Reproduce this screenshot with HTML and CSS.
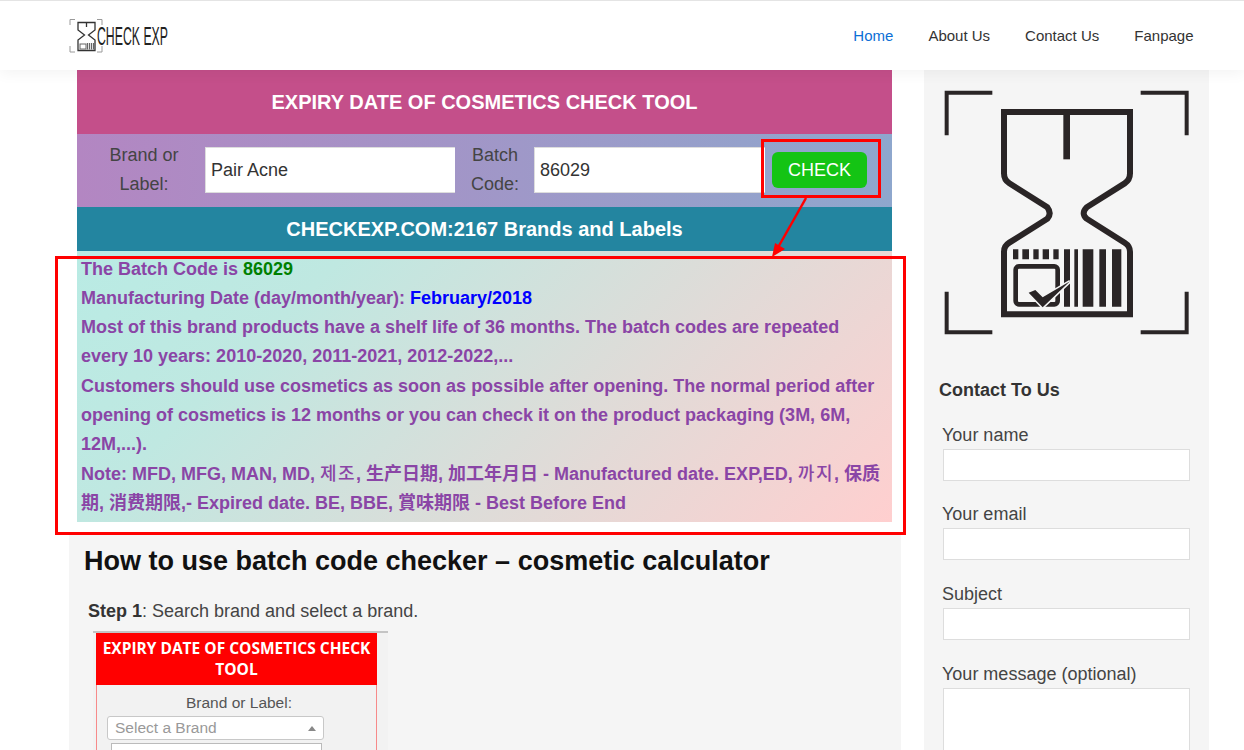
FILE: index.html
```html
<!DOCTYPE html>
<html lang="en">
<head>
<meta charset="utf-8">
<title>Check Exp</title>
<link rel="stylesheet" href="styles.css">
</head>
<body>
<header class="site-header">
  <a class="logo" href="#">
    <svg class="logo-svg" width="104" height="36" viewBox="0 0 104 36">
      <path class="logo-corners" d="M6 1.500H1V7M28 1.500H33V7M1 28V34H6M33 28V34H28"/>
      <path class="logo-glass" d="M9 4.500H26V12L19.500 17L26 22V32.500H9V22L15.500 17L9 12Z"/>
      <path class="logo-glass" d="M17.500 4.500V9"/>
      <rect class="logo-box" x="11" y="26" width="6" height="5"/>
      <path class="logo-bars" d="M18.500 25V31.500M20.500 25V31.500M22.500 25V31.500M24.500 25V31.500"/>
      <text class="logo-text" x="28" y="27" textLength="71" lengthAdjust="spacingAndGlyphs">CHECK EXP</text>
    </svg>
  </a>
  <nav class="nav">
    <a class="nav-link is-active" href="#">Home</a>
    <a class="nav-link" href="#">About Us</a>
    <a class="nav-link" href="#">Contact Us</a>
    <a class="nav-link" href="#">Fanpage</a>
  </nav>
</header>

<div class="page">
  <main class="main">
    <section class="tool">
      <h1 class="tool-title">EXPIRY DATE OF COSMETICS CHECK TOOL</h1>
      <form class="tool-form">
        <label class="field-label field-label-brand">Brand or Label:</label>
        <input class="field field-brand" type="text" value="Pair Acne">
        <label class="field-label field-label-code">Batch Code:</label>
        <input class="field field-code" type="text" value="86029">
        <button class="check-btn" type="button">CHECK</button>
      </form>
      <div class="tool-count">CHECKEXP.COM:2167 Brands and Labels</div>
      <div class="tool-result">
        <div>The Batch Code is <span class="ok">86029</span></div>
        <div>Manufacturing Date (day/month/year): <span class="date">February/2018</span></div>
        <div>Most of this brand products have a shelf life of 36 months. The batch codes are repeated every 10 years: 2010-2020, 2011-2021, 2012-2022,...</div>
        <div>Customers should use cosmetics as soon as possible after opening. The normal period after opening of cosmetics is 12 months or you can check it on the product packaging (3M, 6M, 12M,...).</div>
        <div>Note: MFD, MFG, MAN, MD, <span class="ko">제조</span>, 生产日期, 加工年月日 - Manufactured date. EXP,ED, <span class="ko">까지</span>, 保质期, 消费期限,- Expired date. BE, BBE, 賞味期限 - Best Before End</div>
      </div>
    </section>

    <article class="article">
      <h2 class="article-title">How to use batch code checker – cosmetic calculator</h2>
      <p class="step"><strong>Step 1</strong>: Search brand and select a brand.</p>
      <div class="shot">
        <div class="shot-card">
          <div class="shot-title">EXPIRY DATE OF COSMETICS CHECK TOOL</div>
          <div class="shot-body">
            <div class="shot-label">Brand or Label:</div>
            <div class="shot-select"><span>Select a Brand</span><i class="shot-caret"></i></div>
            <div class="shot-search"></div>
          </div>
        </div>
      </div>
    </article>
  </main>

  <aside class="side">
    <svg class="side-logo" width="245" height="245" viewBox="72 60 735 735">
      <path class="sl-corner" d="M217 68H80V196M662 68H800V196M80 665V787H217M800 665V787H662"/>
      <path class="sl-glass" d="M252 126H630V310Q630 330 614 340L500 412Q482 430 500 446L614 518Q630 528 630 545V733H252V545Q252 528 268 518L382 446Q396 430 382 412L268 340Q252 330 252 310Z"/>
      <path class="sl-stem" d="M440 135V268"/>
      <path class="sl-bars" d="M279 538h16v30h-16zM307 538h20v30h-20zM340 538h16v30h-16zM368 538h19v30h-19zM400 538h16v30h-16zM432 538h18v172h-18zM463 538h11v172h-11zM488 538h32v172h-32zM538 538h20v172h-20zM576 538h28v172h-28z"/>
      <rect class="sl-box" x="287" y="589" width="126" height="114" rx="10"/>
      <path class="sl-check" d="M326 668L346 660L368 682L450 634L368 712Z"/>
    </svg>
    <h3 class="side-title">Contact To Us</h3>
    <form class="contact">
      <label class="contact-field">Your name<input class="contact-input" type="text"></label>
      <label class="contact-field">Your email<input class="contact-input" type="text"></label>
      <label class="contact-field">Subject<input class="contact-input" type="text"></label>
      <label class="contact-field">Your message (optional)<textarea class="contact-area"></textarea></label>
    </form>
  </aside>

  <div class="mark mark-btn"></div>
  <div class="mark mark-result"></div>
  <svg class="mark-arrow" width="50" height="70" viewBox="0 0 50 70">
    <path class="arrow-line" d="M44 1L14 54"/>
    <path class="arrow-head" d="M10 60L13 46L23 52Z"/>
  </svg>
</div>
</body>
</html>
```
FILE: styles.css
```css
* { box-sizing: border-box; }
html, body { height: 750px; overflow: hidden; }
body {
  margin: 0;
  background: #fff;
  color: #333;
  font-family: "Liberation Sans", "Noto Sans CJK SC", "Noto Sans CJK KR", sans-serif;
  font-size: 18px;
}

.site-header {
  position: relative;
  z-index: 2;
  height: 70px;
  display: flex;
  align-items: center;
  justify-content: space-between;
  padding: 0 50.500px 0 69px;
  background: #fff;
  border-top: 1px solid #e4e4e4;
  box-shadow: 0 3px 14px rgba(0, 0, 0, .05);
}
.logo { display: block; height: 36px; }
.logo-svg { display: block; overflow: visible; }
.logo-corners { fill: none; stroke: #9a9a9a; stroke-width: 1; }
.logo-glass { fill: none; stroke: #333; stroke-width: 1.300; }
.logo-box { fill: none; stroke: #666; stroke-width: 1; }
.logo-bars { fill: none; stroke: #666; stroke-width: 1.200; }
.logo-text { font-family: "Liberation Sans", sans-serif; font-size: 26px; fill: #222; }

.nav { display: flex; gap: 35px; }
.nav-link { color: #333; font-size: 15px; text-decoration: none; }
.nav-link.is-active { color: #0b6fd6; }

.page {
  position: relative;
  display: flex;
  gap: 23px;
  padding-left: 69px;
  height: 680px;
  overflow: hidden;
}
.main { width: 832px; flex: none; }

.tool { margin: 0 9px 0 8px; }
.tool-title {
  margin: 0;
  height: 64px;
  display: flex;
  align-items: center;
  justify-content: center;
  background: #c44f8a;
  color: #fff;
  font-size: 20px;
  font-weight: 700;
}
.tool-form {
  height: 73px;
  display: flex;
  align-items: center;
  background: linear-gradient(90deg, #b386c2, #8ea7cd);
  padding: 0 0 1px 9px;
}
.field-label { text-align: center; line-height: 29px; color: #444; flex: none; }
.field-label-brand { width: 116px; margin-right: 3px; }
.field-label-code { width: 64px; margin: 0 7px 0 8px; }
.field {
  height: 46px;
  border: 1px solid #ddd;
  border-right: 0;
  background: #fff;
  font: inherit;
  color: #333;
  padding: 0 5px;
  flex: none;
}
.field-brand { width: 250px; }
.field-code { width: 231px; }
.check-btn {
  width: 95px;
  height: 36px;
  margin-left: 7px;
  border: 0;
  border-radius: 6px;
  background: #14c414;
  color: #fff;
  font: inherit;
  padding: 0;
}
.tool-count {
  height: 44px;
  display: flex;
  align-items: center;
  justify-content: center;
  background: #2385a0;
  color: #fff;
  font-size: 20px;
  font-weight: 700;
}
.tool-result {
  height: 271px;
  padding: 3.600px 4px 0;
  background: linear-gradient(135deg, #b9ebe4 0%, #bfe8e1 25%, #ffcfcf 100%);
  color: #8a45a6;
  font-weight: 700;
  line-height: 29.300px;
}
.ok { color: #008000; }
.date { color: #00f; }
.ko { font-family: "Noto Sans CJK KR", sans-serif; font-weight: 500; letter-spacing: 1.500px; line-height: 1; }

.article {
  margin-top: 13px;
  height: 300px;
  background: #f5f5f5;
  padding: 9px 15px 0;
}
.article-title { margin: 0; color: #111; font-size: 27px; font-weight: 700; line-height: 34px; }
.step { margin: 21px 0 0 4px; color: #444; line-height: 24px; }
.step strong { color: #333; }

.shot {
  width: 295px;
  height: 200px;
  margin: 8px 0 0 9px;
  background: #f2f2f2;
  border-top: 2px solid #c4c4c4;
}
.shot-card { width: 281px; height: 200px; margin-left: 3px; border: 1px solid #f78a8a; border-top: 0; }
.shot-title {
  height: 52px;
  margin: 0 -1px;
  padding: 5px 4px 0;
  background: #f00;
  color: #fff;
  font-family: "Open Sans", sans-serif;
  font-size: 15.500px;
  font-weight: 700;
  line-height: 21px;
  text-align: center;
}
.shot-body { padding: 8px 10px 0; }
.shot-label { width: 264px; color: #555; font-size: 15.500px; text-align: center; line-height: 20px; }
.shot-select {
  display: flex;
  align-items: center;
  justify-content: space-between;
  width: 217px;
  height: 24px;
  margin-top: 3px;
  padding: 0 7px;
  background: #fff;
  border: 1px solid #c8c8c8;
  border-radius: 3px;
  color: #999;
  font-size: 15.500px;
}
.shot-caret { width: 0; height: 0; border: 4px solid transparent; border-top: 0; border-bottom: 5px solid #888; }
.shot-search { width: 211px; height: 30px; margin: 3px 0 0 4px; background: #fff; border: 1px solid #bbb; }

.side { width: 285px; flex: none; height: 680px; background: #f5f5f5; padding: 20px 15px 0; }
.side-logo { display: block; margin-left: 5px; }
.sl-corner { fill: none; stroke: #2a2526; stroke-width: 12; }
.sl-glass { fill: none; stroke: #2a2526; stroke-width: 18; }
.sl-stem { fill: none; stroke: #2a2526; stroke-width: 20; }
.sl-bars { fill: #2a2526; }
.sl-box { fill: #f5f5f5; stroke: #2a2526; stroke-width: 14; }
.sl-check { fill: #2a2526; stroke: #f5f5f5; stroke-width: 9; paint-order: stroke; }
.side-title { margin: 43px 0 0; color: #333; font-size: 18px; font-weight: 700; line-height: 24px; }
.contact { margin-top: 21.700px; padding-left: 3px; }
.contact-field { display: block; color: #444; line-height: 22px; margin-bottom: 22.600px; }
.contact-field:last-child { padding-top: 1px; }
.contact-input, .contact-area {
  display: block;
  width: 247px;
  margin: 3px 0 0 1px;
  background: #fff;
  border: 1px solid #ddd;
}
.contact-input { height: 32px; }
.contact-area { height: 160px; resize: none; }

.mark { position: absolute; border: 3px solid #f00; }
.mark-btn { left: 761px; top: 69px; width: 120px; height: 59px; }
.mark-result { left: 55px; top: 186px; width: 851px; height: 279px; }
.mark-arrow { position: absolute; left: 762px; top: 127px; }
.arrow-line { fill: none; stroke: #f00; stroke-width: 2.500; }
.arrow-head { fill: #f00; }
```
